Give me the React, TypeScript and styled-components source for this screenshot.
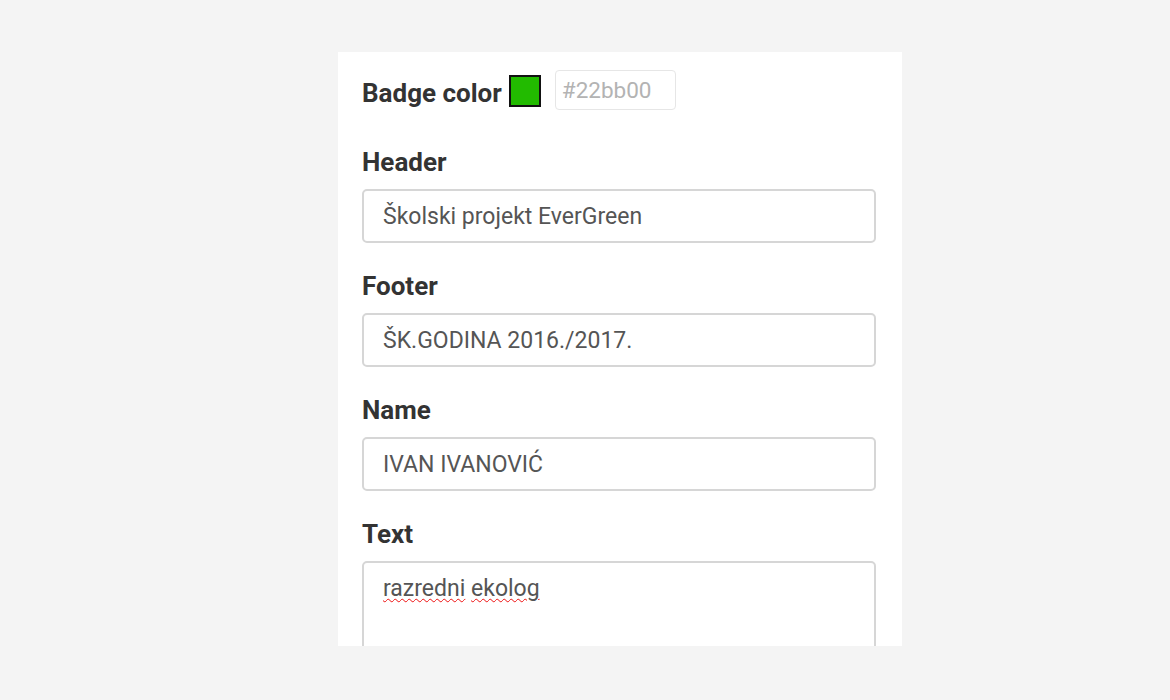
import React from "react";
import styled, { createGlobalStyle } from "styled-components";

const Global = createGlobalStyle`
  html, body { margin: 0; padding: 0; background: #f4f4f4; }
  body { font-family: Roboto, "Noto Sans", Arial, sans-serif; }
`;

const Page = styled.div`
  width: 1170px;
  height: 700px;
  display: flex;
  padding: 52px 0 0 338px;
  box-sizing: border-box;
`;

const Panel = styled.div`
  width: 564px;
  height: 594px;
  background: #ffffff;
  box-sizing: border-box;
  padding: 18px 26px 0 24px;
  overflow: hidden;
`;

const BadgeRow = styled.div`
  display: flex;
  align-items: center;
  height: 40px;
  margin-bottom: 37px;
`;

const Label = styled.div`
  font-family: Roboto, Arial, sans-serif;
  font-weight: 700;
  font-size: 26px;
  line-height: 30px;
  color: #333333;
`;

const BadgeLabel = styled(Label)`
  margin-top: 6px;
`;

const Swatch = styled.div<{ $color: string }>`
  width: 32px;
  height: 32px;
  box-sizing: border-box;
  border: 2px solid #111;
  background: ${(p) => p.$color};
  margin-left: 7px;
  margin-top: 2px;
`;

const HexBox = styled.div`
  width: 121px;
  height: 40px;
  box-sizing: border-box;
  margin-left: 14px;
  border: 1px solid #e6e6e6;
  border-radius: 4px;
  display: flex;
  align-items: center;
  padding-left: 6px;
  font-size: 22.5px;
  color: #b3b3b3;
`;

const Group = styled.div`
  margin-bottom: 28px;
`;

const FieldLabel = styled(Label)`
  margin-bottom: 12px;
`;

const Input = styled.div`
  height: 54px;
  box-sizing: border-box;
  border: 2px solid #d6d6d6;
  border-radius: 5px;
  display: flex;
  align-items: center;
  padding-left: 19px;
  font-size: 23px;
  color: #555555;
`;

const TextArea = styled.div`
  height: 120px;
  box-sizing: border-box;
  border: 2px solid #d6d6d6;
  border-radius: 5px;
  padding: 11px 19px;
  font-size: 23px;
  line-height: 30px;
  color: #555555;
`;

const Misspelled = styled.span`
  text-decoration: underline wavy #ee1111;
  text-decoration-thickness: 1px;
  text-underline-offset: 2px;
`;

const fields = [
  { label: "Header", value: "Školski projekt EverGreen" },
  { label: "Footer", value: "ŠK.GODINA 2016./2017." },
  { label: "Name", value: "IVAN IVANOVIĆ" },
];

export default function App() {
  return (
    <>
      <Global />
      <Page>
        <Panel>
          <BadgeRow>
            <BadgeLabel>Badge color</BadgeLabel>
            <Swatch $color="#22bb00" />
            <HexBox>#22bb00</HexBox>
          </BadgeRow>
          {fields.map((f) => (
            <Group key={f.label}>
              <FieldLabel>{f.label}</FieldLabel>
              <Input>{f.value}</Input>
            </Group>
          ))}
          <Group>
            <FieldLabel>Text</FieldLabel>
            <TextArea>
              <Misspelled>razredni</Misspelled> <Misspelled>ekolog</Misspelled>
            </TextArea>
          </Group>
        </Panel>
      </Page>
    </>
  );
}
